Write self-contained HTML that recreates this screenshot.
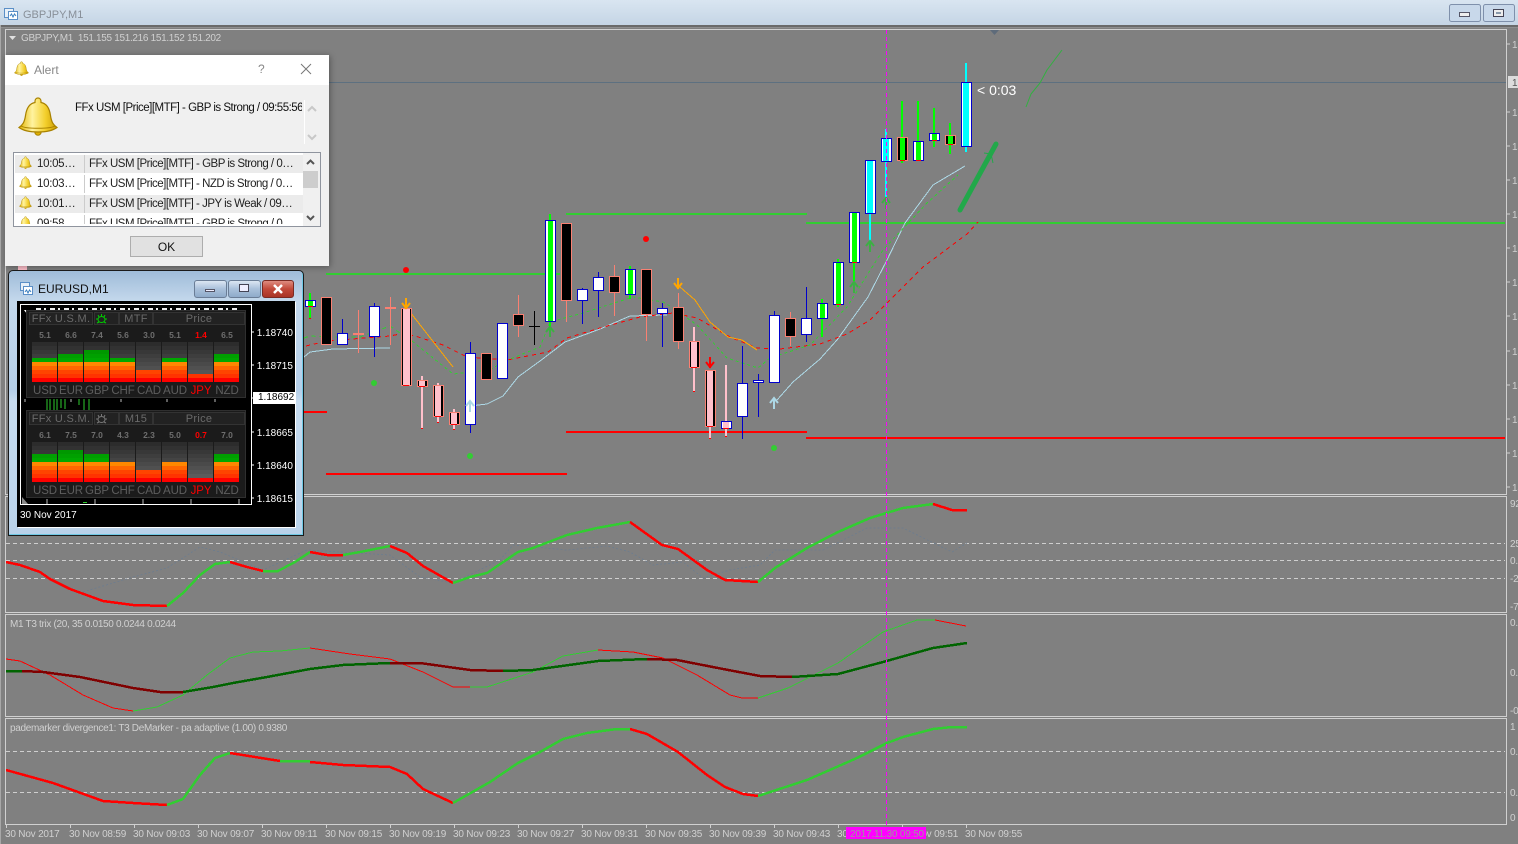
<!DOCTYPE html>
<html><head><meta charset="utf-8"><title>GBPJPY,M1</title>
<style>
html,body{margin:0;padding:0;width:1518px;height:844px;overflow:hidden;background:#808080;font-family:"Liberation Sans",sans-serif}
svg{display:block}
#m{position:absolute;left:0;top:0}
.a{font:10px "Liberation Sans",sans-serif;fill:#d0d0d0;letter-spacing:-.2px}
.a2{letter-spacing:-.32px}
.abs{position:absolute;white-space:nowrap}
#alert{position:absolute;left:5px;top:55px;width:324px;height:211px;background:#f0f0f0;box-shadow:1px 1px 6px rgba(0,0,0,.35)}
#alert .t{position:absolute;left:0;top:0;width:324px;height:30px;background:#fff}
.row{position:absolute;left:1px;width:289px;height:18px;font-size:11.5px;line-height:18px;color:#222;white-space:nowrap;overflow:hidden}
.row.g{background:#ebebeb}
.row span{position:absolute;top:0}
.row i{position:absolute;left:69px;top:0;width:1px;height:20px;background:#ccc}
#eur{position:absolute;left:8px;top:270px;width:294px;height:264px;border:1px solid #1a1a1a;border-top-left-radius:5px;border-top-right-radius:5px;background:linear-gradient(#9fbcd9,#c4d8ec 30px,#b5cfe9 120px,#c6dbef 130px,#b9d2ea);box-shadow:inset -1px -1px 0 #6fc8e4}
.wb{position:absolute;top:9px;height:16px;width:31px;border:1px solid #6a7d96;border-radius:3px;background:linear-gradient(#dbe6f2,#a9c0da 50%,#8fabca)}
#client{position:absolute;left:8px;top:30px;width:278px;height:226px;background:#000;box-shadow:1px 1px 0 #fff}
.p{position:absolute;left:5px;width:220px;height:88px;background:#1b1b1b;border:1px solid #2f2f2f;box-sizing:border-box}
.h{position:absolute;top:1px;height:13px;background:#222;border:1px solid #333;box-sizing:border-box;color:#6a6a6a;font:11px/12px "Liberation Sans",sans-serif;text-align:center;letter-spacing:.3px}
.v,.c{position:absolute;width:26px;text-align:center;color:#6e6e6e;white-space:nowrap}
.v{top:19px;font:bold 8.5px/10px "Liberation Sans",sans-serif}
.c{top:73px;font:11.5px/14px "Liberation Sans",sans-serif;letter-spacing:-.1px;color:#5e5e5e}
.b{position:absolute;top:31px;width:25px;height:40px;background:linear-gradient(#2c2c2c 0 4px,#323232 4px 8px,#383838 8px 12px,#3e3e3e 12px 16px,#444 16px 20px,#4a4a4a 20px 24px,#505050 24px 28px,#565656 28px 32px,#5c5c5c 32px 36px,#626262 36px 40px)}
.b b{position:absolute;left:0;right:0;bottom:0;display:block;background:linear-gradient(to top,#f00 0 4px,#f30 4px 8px,#f40 8px 12px,#f60 12px 16px,#f80 16px 20px,#00a800 20px 24px,#00a000 24px 28px,#009800 28px 40px);background-size:100% 40px;background-position:bottom}
.red{color:#f00!important}
.ax{position:absolute;left:237px;color:#fff;font:10px/12px "Liberation Sans",sans-serif}
</style></head><body>

<svg id="m" width="1518" height="844" viewBox="0 0 1518 844">
<defs>
<linearGradient id="tb" x1="0" y1="0" x2="0" y2="1"><stop offset="0" stop-color="#d9e5f1"/><stop offset="1" stop-color="#c5d5e5"/></linearGradient>
<linearGradient id="bell" x1="0" y1="0" x2="1" y2="0"><stop offset="0" stop-color="#e3b400"/><stop offset=".35" stop-color="#fff3a0"/><stop offset=".7" stop-color="#f3cf2c"/><stop offset="1" stop-color="#c99a00"/></linearGradient>
<symbol id="bl" viewBox="0 0 40 40"><circle cx="20" cy="36" r="3.2" fill="#e0b000" stroke="#a98200"/><path d="M20 2a3 3 0 0 1 3 3v1.500c6 1 8.500 6 9.500 13s3 9.500 6.500 12c-4 3-11 4.500-19 4.500S5 34.500 1 31.500c3.500-2.500 5.500-5 6.500-12S11 7.500 17 6.500V5a3 3 0 0 1 3-3z" fill="url(#bell)" stroke="#a98200" stroke-width="1.200"/><path d="M3 30c5 3 29 3 34 0" fill="none" stroke="#a98200"/></symbol>
</defs>
<rect width="1518" height="844" fill="#808080"/>
<rect width="1518" height="25" fill="url(#tb)"/>
<rect y="25" width="1518" height="2" fill="#6a6a6a"/>
<rect y="27" width="1518" height="1" fill="#8e8e8e"/>
<rect y="25" width="1" height="819" fill="#a8a8a8"/>

<!-- title icon -->
<g fill="none" stroke="#5b8fc7" shape-rendering="crispEdges"><rect x="4.500" y="8.500" width="9" height="9" fill="#e8f0f8"/><rect x="8.500" y="11.500" width="9" height="8" fill="#fff"/></g>
<path d="M10 16l1.500-2 1.500 3 1.500-3 1.500 2" fill="none" stroke="#3b7fc0"/>
<text x="23" y="18" font-size="11" fill="#888f98" font-family="Liberation Sans">GBPJPY,M1</text>
<!-- window buttons -->
<g fill="#c8d8ea" stroke="#7f90ab"><rect x="1449.500" y="4.500" width="31" height="17" rx="2"/><rect x="1483.500" y="4.500" width="31" height="17" rx="2"/></g>
<rect x="1459.500" y="12.500" width="10" height="4" fill="#eee" stroke="#556"/>
<rect x="1493.500" y="9.500" width="10" height="7" fill="#eee" stroke="#445"/><rect x="1496" y="12" width="5" height="2" fill="#8899aa"/>

<!-- pane frames -->
<g fill="none" stroke="#d0d0d0" shape-rendering="crispEdges">
<rect x="5.500" y="29.500" width="1501" height="465"/>
<rect x="5.500" y="496.500" width="1501" height="116"/>
<rect x="5.500" y="614.500" width="1501" height="102"/>
<rect x="5.500" y="718.500" width="1501" height="106"/>
<path d="M1507 44h3M1507 112h3M1507 146h3M1507 180h3M1507 214h3M1507 248h3M1507 282h3M1507 316h3M1507 351h3M1507 385h3M1507 419h3M1507 453h3M1507 487h3"/>
<path d="M6.500 825v3M70.500 825v3M134.500 825v3M198.500 825v3M262.500 825v3M326.500 825v3M390.500 825v3M454.500 825v3M518.500 825v3M582.500 825v3M646.500 825v3M710.500 825v3M774.500 825v3M838.500 825v3M902.500 825v3M966.500 825v3"/>
</g>

<!-- header text -->
<path d="M9 36h7l-3.500 4z" fill="#e0e0e0"/>
<text x="21" y="41" class="a a2">GBPJPY,M1&#160; 151.155 151.216 151.152 151.202</text>
<path d="M990 30h9l-4.500 5z" fill="#5e6b7a"/>

<!-- right axis labels -->
<g class="a">
<text class="a" x="1512" y="48">151.3</text><text class="a" x="1512" y="116">151.2</text><text class="a" x="1512" y="150">151.2</text><text class="a" x="1512" y="184">151.2</text><text class="a" x="1512" y="218">151.2</text><text class="a" x="1512" y="252">151.1</text><text class="a" x="1512" y="286">151.1</text><text class="a" x="1512" y="320">151.1</text><text class="a" x="1512" y="355">151.1</text><text class="a" x="1512" y="389">151.1</text><text class="a" x="1512" y="423">151.1</text><text class="a" x="1512" y="457">151.1</text><text class="a" x="1512" y="491">151.1</text>
<text class="a" x="1510" y="507">92</text><text class="a" x="1510" y="547">25</text><text class="a" x="1510" y="564">0.</text><text class="a" x="1510" y="582">-2</text><text class="a" x="1510" y="610">-7</text>
<text class="a" x="1510" y="626">0.</text><text class="a" x="1510" y="676">0.</text><text class="a" x="1510" y="714">-0</text>
<text class="a" x="1510" y="730">1</text><text class="a" x="1510" y="755">0.</text><text class="a" x="1510" y="796">0.</text><text class="a" x="1510" y="821">0</text>
</g>
<rect x="1508" y="76" width="10" height="12" fill="#dcdcdc"/>
<text x="1512" y="86" font-size="10" fill="#555" font-family="Liberation Sans">151</text>

<!-- price line -->
<path d="M6 82.500H1506" stroke="#5d7080" shape-rendering="crispEdges"/>

<!-- horizontal levels -->
<g fill="none" stroke-width="2" shape-rendering="crispEdges">
<path stroke="#32cd32" d="M326 274H560M566 214H807M806 223H1505"/>
<path stroke="#f00" d="M304 412H327M326 474H567M566 432H807M806 438H1505"/>
</g>

<!-- MAs -->
<g fill="none" shape-rendering="crispEdges">
<polyline stroke="#add8e6" points="304,357 310,352 333,349 390,348"/>
<polyline stroke="#add8e6" points="470,406 487,404 503,396 518,377 540,361 565,342 600,329 630,316 667,315"/>
<polyline stroke="#add8e6" points="777,400 793,382 820,359 837,340 868,297 887,260 905,223 933,185 965,166"/>
<polyline stroke="#f00" stroke-dasharray="4 4" points="306,346 327,341 390,336 400,334 415,336 443,345 467,357 507,360 548,352 567,338 600,328 640,317 673,313 697,318 730,337 757,348 780,349 820,344 847,334 870,320 897,293 923,267 967,234 978,222"/>
<polyline stroke="#32cd32" stroke-dasharray="4 4" points="304,338 310,336 327,337 360,337 390,326 400,333"/>
<polyline stroke="#32cd32" stroke-dasharray="3 3" points="412,341 453,374 490,370 503,362 540,347 550,322 583,313 633,297 663,302 673,308 697,325 727,358 758,368 770,358 810,345 847,307 883,250 927,203 958,175"/>
<polyline stroke="#ffa500" points="410,312 453,367"/>
<polyline stroke="#ffa500" points="680,287 695,300 710,322 728,337 742,340 757,350"/>
</g>

<!-- wicks -->
<g shape-rendering="crispEdges">
<g fill="#fa8072">
<rect x="358" y="310" width="1" height="43"/><rect x="390" y="297" width="1" height="48"/><rect x="518" y="295" width="1" height="42"/><rect x="566" y="301" width="1" height="21"/><rect x="614" y="265" width="1" height="51"/><rect x="646" y="315" width="1" height="26"/><rect x="678" y="293" width="1" height="56"/><rect x="790" y="312" width="1" height="34"/>
</g>
<g fill="#0000cd">
<rect x="342" y="319" width="1" height="14"/><rect x="374" y="303" width="1" height="54"/><rect x="470" y="342" width="1" height="91"/><rect x="582" y="288" width="1" height="36"/><rect x="598" y="272" width="1" height="45"/><rect x="662" y="303" width="1" height="44"/><rect x="742" y="346" width="1" height="93"/><rect x="758" y="374" width="1" height="43"/><rect x="774" y="311" width="1" height="5"/><rect x="806" y="287" width="1" height="55"/>
</g>
<rect x="534" y="311" width="1" height="34" fill="#000"/><rect x="529" y="326" width="11" height="1" fill="#000"/>
<rect x="353" y="333" width="11" height="2" fill="#fa8072"/><rect x="385" y="307" width="11" height="2" fill="#fa8072"/>
<g fill="#ffc0cb">
<rect x="421" y="376" width="2" height="53"/><rect x="437" y="383" width="2" height="40"/><rect x="453" y="409" width="2" height="21"/><rect x="693" y="327" width="2" height="65"/><rect x="709" y="370" width="2" height="69"/><rect x="725" y="365" width="2" height="72"/>
</g>
<g fill="#0f0">
<rect x="309" y="293" width="2" height="26"/><rect x="549" y="214" width="2" height="119"/><rect x="629" y="266" width="2" height="33"/><rect x="821" y="299" width="2" height="38"/><rect x="837" y="259" width="2" height="48"/><rect x="853" y="212" width="2" height="69"/><rect x="901" y="101" width="2" height="62"/><rect x="917" y="101" width="2" height="60"/><rect x="933" y="108" width="2" height="39"/><rect x="949" y="123" width="2" height="31"/>
</g>
<g fill="#0ff">
<rect x="869" y="160" width="2" height="81"/><rect x="885" y="129" width="2" height="68"/><rect x="965" y="63" width="2" height="89"/>
</g>

<!-- black bodies -->
<g fill="#000" stroke="#fa8072">
<rect x="321.500" y="297.500" width="10" height="47"/><rect x="513.500" y="314.500" width="10" height="11"/><rect x="481.500" y="353.500" width="10" height="26"/><rect x="561.500" y="223.500" width="10" height="77"/><rect x="609.500" y="276.500" width="10" height="16"/><rect x="641.500" y="269.500" width="10" height="45"/><rect x="673.500" y="307.500" width="10" height="34"/><rect x="785.500" y="318.500" width="10" height="18"/>
<rect x="401.500" y="308.500" width="10" height="77"/><rect x="417.500" y="380.500" width="10" height="6"/><rect x="433.500" y="385.500" width="10" height="31"/><rect x="449.500" y="412.500" width="10" height="12"/><rect x="689.500" y="341.500" width="10" height="26"/><rect x="705.500" y="370.500" width="10" height="56"/>
<rect x="897.500" y="137.500" width="10" height="23"/><rect x="945.500" y="135.500" width="10" height="9"/>
</g>
<!-- white bodies -->
<g fill="#fff" stroke="#0000cd">
<rect x="305.500" y="300.500" width="10" height="6"/><rect x="337.500" y="333.500" width="10" height="11"/><rect x="369.500" y="306.500" width="10" height="30"/><rect x="465.500" y="353.500" width="10" height="71"/><rect x="497.500" y="323.500" width="10" height="55"/><rect x="545.500" y="220.500" width="10" height="101"/><rect x="577.500" y="289.500" width="10" height="11"/><rect x="593.500" y="277.500" width="10" height="13"/><rect x="625.500" y="269.500" width="10" height="25"/><rect x="657.500" y="308.500" width="10" height="5"/><rect x="721.500" y="421.500" width="10" height="7"/><rect x="737.500" y="383.500" width="10" height="33"/><rect x="753.500" y="380.500" width="10" height="2"/><rect x="769.500" y="315.500" width="10" height="67"/><rect x="801.500" y="318.500" width="10" height="16"/><rect x="817.500" y="303.500" width="10" height="15"/><rect x="833.500" y="262.500" width="10" height="42"/><rect x="849.500" y="212.500" width="10" height="50"/><rect x="865.500" y="160.500" width="10" height="53"/><rect x="881.500" y="138.500" width="10" height="23"/><rect x="913.500" y="141.500" width="10" height="19"/><rect x="929.500" y="133.500" width="10" height="7"/><rect x="961.500" y="82.500" width="10" height="64"/>
</g>
<!-- centre bars -->
<g fill="#ffc0cb">
<rect x="403" y="309" width="7" height="76"/><rect x="419" y="381" width="6" height="5"/><rect x="435" y="386" width="6" height="30"/><rect x="451" y="413" width="6" height="11"/><rect x="691" y="342" width="6" height="25"/><rect x="707" y="371" width="6" height="55"/><rect x="723" y="422" width="6" height="6"/>
</g>
<g fill="#0f0">
<rect x="308" y="301" width="5" height="5"/><rect x="548" y="221" width="5" height="100"/><rect x="628" y="270" width="5" height="24"/><rect x="820" y="304" width="5" height="14"/><rect x="836" y="263" width="5" height="41"/><rect x="852" y="213" width="5" height="49"/><rect x="900" y="138" width="5" height="22"/><rect x="916" y="142" width="5" height="18"/><rect x="932" y="134" width="5" height="6"/><rect x="948" y="136" width="5" height="8"/>
</g>
<g fill="#0ff">
<rect x="867" y="161" width="6" height="52"/><rect x="883" y="139" width="6" height="22"/><rect x="963" y="83" width="6" height="63"/>
</g>
<g fill="#f00">
<rect x="308" y="306" width="5" height="1"/><rect x="309" y="318" width="2" height="1"/><rect x="403" y="385" width="6" height="1"/><rect x="419" y="386" width="6" height="1"/><rect x="421" y="428" width="2" height="1"/><rect x="435" y="416" width="6" height="1"/><rect x="437" y="422" width="2" height="1"/><rect x="451" y="424" width="6" height="1"/><rect x="453" y="429" width="2" height="1"/><rect x="691" y="367" width="6" height="1"/><rect x="693" y="391" width="2" height="1"/><rect x="707" y="426" width="6" height="1"/><rect x="709" y="438" width="2" height="1"/><rect x="723" y="428" width="6" height="1"/><rect x="725" y="436" width="2" height="1"/><rect x="836" y="304" width="5" height="1"/><rect x="852" y="262" width="5" height="1"/><rect x="900" y="160" width="5" height="1"/><rect x="916" y="160" width="5" height="1"/><rect x="932" y="140" width="5" height="1"/><rect x="948" y="144" width="5" height="1"/>
</g>
</g>

<!-- dots -->
<circle cx="406" cy="270" r="3" fill="#f00"/><circle cx="646" cy="239" r="3" fill="#f00"/>
<circle cx="374" cy="383" r="3" fill="#32cd32"/><circle cx="470" cy="456" r="3" fill="#32cd32"/><circle cx="774" cy="448" r="3" fill="#32cd32"/>

<!-- arrows -->
<g fill="none" stroke-width="2">
<path stroke="#ffa500" d="M406 298v11M402 303l4 5 4-5"/>
<path stroke="#ffa500" d="M678 278v11M674 283l4 5 4-5"/>
<path stroke="#f00" d="M710 357v11M706 362l4 5 4-5"/>
<path stroke="#add8e6" d="M470 412v-11M466 406l4-5 4 5"/>
<path stroke="#add8e6" d="M774 409v-11M770 403l4-5 4 5"/>
<path stroke="#3cb043" d="M550 337v-11M546 332l4-5 4 5"/>
<path stroke="#3cb043" d="M854 293v-11M850 287l4-5 4 5"/>
<path stroke="#3cb043" d="M870 252v-11M866 246l4-5 4 5"/>
<path stroke="#3cb043" d="M886 209v-11M882 203l4-5 4 5"/>
</g>

<!-- trend arrow -->
<path d="M960 210L996 144" stroke="#22a84a" stroke-width="5" stroke-linecap="round" fill="none"/>
<path d="M984 153l7 1 2 9" stroke="#22a84a" fill="none"/>
<polyline points="1026,107 1031,94 1040,83 1047,70 1062,50" fill="none" stroke="#32b040"/>
<text x="977" y="95" font-size="14" fill="#fff" font-family="Liberation Sans">&lt; 0:03</text>

<!-- indicator dashes -->
<g stroke="#cfcfcf" stroke-dasharray="4 3" shape-rendering="crispEdges">
<path d="M6 543.500H1505M6 560.500H1505M6 578.500H1505M6 751.500H1505M6 792.500H1505"/>
</g>

<!-- pane 2 -->
<g fill="none" shape-rendering="crispEdges">
<polyline stroke="#6f7d8c" stroke-dasharray="2 2" points="83,592 133,577 167,568 200,547 220,552 263,570 307,550 390,555 420,577 453,583 500,560 513,545 567,550 607,546 630,552 653,565 683,562 703,578 730,570 760,565 775,550 823,550 867,528 903,528 952,552 967,543"/>
<g stroke-width="2.500">
<polyline stroke="#f00" points="6,562 20,565 40,572 50,579 70,589 103,601 133,605 167,606"/>
<polyline stroke="#32cd32" points="167,606 183,593 200,575 215,564 230,562"/>
<polyline stroke="#f00" points="230,562 247,567 263,571"/>
<polyline stroke="#32cd32" points="263,571 278,571 295,562 310,552"/>
<polyline stroke="#f00" points="310,552 327,555 343,555"/>
<polyline stroke="#32cd32" points="343,555 360,552 390,546"/>
<polyline stroke="#f00" points="390,546 407,553 423,566 453,583"/>
<polyline stroke="#32cd32" points="453,583 470,577 487,573 518,552 533,548 567,535 597,528 630,522"/>
<polyline stroke="#f00" points="630,522 662,545 678,549 707,570 725,580 758,582"/>
<polyline stroke="#32cd32" points="758,582 775,568 807,548 838,532 870,518 903,508 933,504"/>
<polyline stroke="#f00" points="933,504 952,510 967,510"/>
</g>
<!-- pane 3 thin -->
<polyline stroke="#f00" points="6,659 20,661 50,675 83,695 113,708 133,711"/>
<polyline stroke="#32cd32" points="133,711 157,707 183,695 207,675 230,658 253,652 280,651 310,648"/>
<polyline stroke="#f00" points="310,648 350,654 390,659 423,672 453,687 470,687"/>
<polyline stroke="#32cd32" points="470,687 487,687 533,672 563,656 598,650"/>
<polyline stroke="#f00" points="598,650 633,652 663,658 697,675 730,695 742,698 758,698"/>
<polyline stroke="#32cd32" points="758,698 788,688 838,663 883,632 917,620 935,620"/>
<polyline stroke="#f00" points="935,620 966,626"/>
<!-- pane 3 thick -->
<g stroke-width="2.500">
<polyline stroke="#006400" points="6,671 22,671"/>
<polyline stroke="#800000" points="22,671 43,672 80,677 133,688 160,692 183,692"/>
<polyline stroke="#006400" points="183,692 213,687 233,683 267,677 310,669 343,665 390,663"/>
<polyline stroke="#800000" points="390,663 420,663 470,670 503,671"/>
<polyline stroke="#006400" points="503,671 533,670 598,661 647,659"/>
<polyline stroke="#800000" points="647,659 677,660 723,669 760,676 792,677"/>
<polyline stroke="#006400" points="792,677 838,674 883,662 933,648 967,643"/>
</g>
<!-- pane 4 -->
<g stroke-width="2.500">
<polyline stroke="#f00" points="6,770 53,783 103,801 133,803 167,805"/>
<polyline stroke="#32cd32" points="167,805 183,799 200,775 215,758 230,753"/>
<polyline stroke="#f00" points="230,753 280,761"/>
<polyline stroke="#32cd32" points="280,761 310,761"/>
<polyline stroke="#f00" points="310,762 343,765 390,767 407,774 423,789 453,803"/>
<polyline stroke="#32cd32" points="453,803 490,782 518,763 540,752 563,739 587,733 617,729 630,729"/>
<polyline stroke="#f00" points="630,729 647,734 678,752 707,775 725,787 743,794 758,796"/>
<polyline stroke="#32cd32" points="758,796 807,780 857,758 887,743 903,737 933,729 952,727 967,727"/>
</g>
</g>

<text x="10" y="627" class="a a2">M1 T3 trix (20, 35 0.0150 0.0244 0.0244</text>
<text x="10" y="731" class="a a2">pademarker divergence1: T3 DeMarker - pa adaptive (1.00) 0.9380</text>

<!-- time axis -->
<text class="a" x="5" y="837">30 Nov 2017</text><text class="a" x="69" y="837">30 Nov 08:59</text><text class="a" x="133" y="837">30 Nov 09:03</text><text class="a" x="197" y="837">30 Nov 09:07</text><text class="a" x="261" y="837">30 Nov 09:11</text><text class="a" x="325" y="837">30 Nov 09:15</text><text class="a" x="389" y="837">30 Nov 09:19</text><text class="a" x="453" y="837">30 Nov 09:23</text><text class="a" x="517" y="837">30 Nov 09:27</text><text class="a" x="581" y="837">30 Nov 09:31</text><text class="a" x="645" y="837">30 Nov 09:35</text><text class="a" x="709" y="837">30 Nov 09:39</text><text class="a" x="773" y="837">30 Nov 09:43</text><text class="a" x="837" y="837">30 Nov 09:47</text><text class="a" x="901" y="837">30 Nov 09:51</text><text class="a" x="965" y="837">30 Nov 09:55</text>
<rect x="846" y="827" width="80" height="12" fill="#f0f"/>
<text x="850" y="837" font-size="10" fill="#9a9a9a" font-family="Liberation Sans" letter-spacing="-.2">2017.11.30 09:50</text>
<path d="M886.500 30V825" stroke="#f0f" stroke-dasharray="4 3" shape-rendering="crispEdges"/>

<rect x="18" y="265" width="9" height="5" fill="#ffc0cb"/>
</svg>

<!-- Alert dialog -->
<div id="alert">
 <div class="t"></div>
 <svg class="abs" style="left:9px;top:6px" width="15" height="15"><use href="#bl" width="15" height="15"/></svg>
 <div class="abs" style="left:29px;top:8px;font-size:12px;color:#888">Alert</div>
 <div class="abs" style="left:253px;top:7px;font-size:12px;color:#888">?</div>
 <svg class="abs" style="left:295px;top:8px" width="12" height="12"><path d="M1 1l10 10M11 1L1 11" stroke="#777" fill="none"/></svg>
 <svg class="abs" style="left:13px;top:41px" width="40" height="40"><use href="#bl" width="40" height="40"/></svg>
 <div class="abs" style="left:70px;top:46px;width:227px;overflow:hidden;font-size:11.5px;line-height:14px;color:#111;letter-spacing:-.5px">FFx USM [Price][MTF] - GBP is Strong / 09:55:56</div>
 <div class="abs" style="left:299px;top:45px;width:1px;height:44px;background:#fff"></div>
 <svg class="abs" style="left:302px;top:49px" width="10" height="40"><path d="M1 7l4-4 4 4M1 31l4 4 4-4" fill="none" stroke="#c8c8c8" stroke-width="2"/></svg>
 <div class="abs" style="left:8px;top:97px;width:306px;height:73px;background:#fff;border:1px solid #8f949e;overflow:hidden">
  <div class="row g" style="top:2px"><svg class="abs" style="left:4px;top:1px" width="13" height="13"><use href="#bl" width="13" height="13"/></svg><span style="left:22px;letter-spacing:-.3px">10:05…</span><i></i><span style="left:74px;letter-spacing:-.5px">FFx USM [Price][MTF] - GBP is Strong / 0…</span></div>
  <div class="row" style="top:22px"><svg class="abs" style="left:4px;top:1px" width="13" height="13"><use href="#bl" width="13" height="13"/></svg><span style="left:22px;letter-spacing:-.3px">10:03…</span><i></i><span style="left:74px;letter-spacing:-.5px">FFx USM [Price][MTF] - NZD is Strong / 0…</span></div>
  <div class="row g" style="top:42px"><svg class="abs" style="left:4px;top:1px" width="13" height="13"><use href="#bl" width="13" height="13"/></svg><span style="left:22px;letter-spacing:-.3px">10:01…</span><i></i><span style="left:74px;letter-spacing:-.5px">FFx USM [Price][MTF] - JPY is Weak / 09…</span></div>
  <div class="row" style="top:62px"><svg class="abs" style="left:4px;top:1px" width="13" height="13"><use href="#bl" width="13" height="13"/></svg><span style="left:22px;letter-spacing:-.3px">09:58…</span><i></i><span style="left:74px;letter-spacing:-.5px">FFx USM [Price][MTF] - GBP is Strong / 0…</span></div>
  <div class="abs" style="left:0;top:71px;width:290px;height:2px;background:#fff"></div>
  <div class="abs" style="left:289px;top:0;width:17px;height:73px;background:#f0f0f0"></div>
  <div class="abs" style="left:289px;top:18px;width:15px;height:17px;background:#cdcdcd"></div>
  <svg class="abs" style="left:291px;top:4px" width="11" height="66"><path d="M2 7l3.500-3.500L9 7M2 59l3.500 3.500L9 59" fill="none" stroke="#555" stroke-width="2"/></svg>
 </div>
 <div class="abs" style="left:125px;top:181px;width:71px;height:19px;background:#e1e1e1;border:1px solid #adadad;text-align:center;font-size:12px;line-height:20px;color:#111">OK</div>
</div>

<!-- EURUSD window -->
<div id="eur">
 <svg class="abs" style="left:10px;top:10px" width="15" height="15"><rect x="1.500" y="1.500" width="9" height="8" fill="#e8f0f8" stroke="#5b8fc7"/><rect x="4.500" y="5.500" width="9" height="8" fill="#fff" stroke="#5b8fc7"/><path d="M6 11l1.500-2 1.500 3 1.500-3 1.500 2" fill="none" stroke="#3b7fc0"/></svg>
 <div class="abs" style="left:29px;top:11px;font-size:12px;line-height:15px;color:#111">EURUSD,M1</div>
 <div class="wb" style="left:185px"><div style="position:absolute;left:10px;top:8px;width:10px;height:3px;background:#eef;border:1px solid #556;box-sizing:border-box"></div></div>
 <div class="wb" style="left:219px"><div style="position:absolute;left:10px;top:3px;width:10px;height:8px;background:#eef;border:1px solid #445;box-sizing:border-box"></div></div>
 <div class="wb" style="left:253px;width:30px;background:linear-gradient(#de8c80,#c2493a 50%,#a83426);border-color:#7a2a22"><svg style="position:absolute;left:9px;top:3px" width="12" height="10"><path d="M2 1l8 8M10 1L2 9" stroke="#fff" stroke-width="2.500"/></svg></div>
 <div id="client">
  <svg class="abs" style="left:0;top:0" width="278" height="226">
   <rect x="3.500" y="3.500" width="231" height="200" fill="none" stroke="#fff" shape-rendering="crispEdges"/>
   <path d="M234 31h3M234 64h3M234 97h3M234 131h3M234 164h3M234 197h3" stroke="#fff" shape-rendering="crispEdges"/>
   <path d="M19 8H220" stroke="#eee" stroke-width="2" stroke-dasharray="5 3 2 4" shape-rendering="crispEdges"/>
   <path d="M7 9h6l-3 4z" fill="#fff"/><path d="M5 203v-7l6 7z" fill="#888"/>
   <path d="M30 98v11M33 98v11M37 98v11M40 98v11M44 98v9M48 98v10M62 98v6M67 98v11M72 98v11" stroke="#2ecc2e" shape-rendering="crispEdges"/>
   <path d="M30 198v5M78 198v5M126 198v5M174 198v5M222 198v5" stroke="#bbb" shape-rendering="crispEdges"/>
   <path d="M8 98v3M54 98v3M104 98v3M150 98v3M198 98v3" stroke="#bbb" shape-rendering="crispEdges"/>
   <rect x="66" y="201" width="4" height="1" fill="#2ecc2e"/>
  </svg>
  <!-- panel 1 -->
  <div class="p" style="top:9px;left:9px">
   <div class="h" style="left:2px;width:64px">FFx U.S.M.</div><div class="h" style="left:67px;width:25px;color:#0c0;font-size:9px"><svg width="13" height="10" style="margin-top:1px"><ellipse cx="6.500" cy="5.500" rx="3.500" ry="3" fill="none" stroke="#0c0"/><path d="M1 5h2M10 5h2M3 1l1 2M10 1L9 3M6.500 0v2M2 9l2-1M11 9L9 8" stroke="#0c0"/></svg></div><div class="h" style="left:92px;width:34px">MTF</div><div class="h" style="left:126px;width:92px">Price</div>
   <div class="v" style="left:5px">5.1</div><div class="v" style="left:31px">6.6</div><div class="v" style="left:57px">7.4</div><div class="v" style="left:83px">5.6</div><div class="v" style="left:109px">3.0</div><div class="v" style="left:135px">5.1</div><div class="v red" style="left:161px">1.4</div><div class="v" style="left:187px">6.5</div>
   <div class="b" style="left:5px"><b style="height:24px"></b></div><div class="b" style="left:31px"><b style="height:28px"></b></div><div class="b" style="left:57px"><b style="height:32px"></b></div><div class="b" style="left:83px"><b style="height:24px"></b></div><div class="b" style="left:109px"><b style="height:12px"></b></div><div class="b" style="left:135px"><b style="height:24px"></b></div><div class="b" style="left:161px"><b style="height:8px"></b></div><div class="b" style="left:187px"><b style="height:28px"></b></div>
   <div class="c" style="left:5px">USD</div><div class="c" style="left:31px">EUR</div><div class="c" style="left:57px">GBP</div><div class="c" style="left:83px">CHF</div><div class="c" style="left:109px">CAD</div><div class="c" style="left:135px">AUD</div><div class="c red" style="left:161px">JPY</div><div class="c" style="left:187px">NZD</div>
  </div>
  <!-- panel 2 -->
  <div class="p" style="top:109px;left:9px">
   <div class="h" style="left:2px;width:64px">FFx U.S.M.</div><div class="h" style="left:67px;width:25px"><svg width="13" height="10" style="margin-top:1px"><ellipse cx="6.500" cy="5.500" rx="3.500" ry="3" fill="none" stroke="#777"/><path d="M1 5h2M10 5h2M3 1l1 2M10 1L9 3M6.500 0v2M2 9l2-1M11 9L9 8" stroke="#777"/></svg></div><div class="h" style="left:92px;width:34px">M15</div><div class="h" style="left:126px;width:92px">Price</div>
   <div class="v" style="left:5px">6.1</div><div class="v" style="left:31px">7.5</div><div class="v" style="left:57px">7.0</div><div class="v" style="left:83px">4.3</div><div class="v" style="left:109px">2.3</div><div class="v" style="left:135px">5.0</div><div class="v red" style="left:161px">0.7</div><div class="v" style="left:187px">7.0</div>
   <div class="b" style="left:5px"><b style="height:28px"></b></div><div class="b" style="left:31px"><b style="height:32px"></b></div><div class="b" style="left:57px"><b style="height:28px"></b></div><div class="b" style="left:83px"><b style="height:20px"></b></div><div class="b" style="left:109px"><b style="height:12px"></b></div><div class="b" style="left:135px"><b style="height:20px"></b></div><div class="b" style="left:161px"><b style="height:4px"></b></div><div class="b" style="left:187px"><b style="height:28px"></b></div>
   <div class="c" style="left:5px">USD</div><div class="c" style="left:31px">EUR</div><div class="c" style="left:57px">GBP</div><div class="c" style="left:83px">CHF</div><div class="c" style="left:109px">CAD</div><div class="c" style="left:135px">AUD</div><div class="c red" style="left:161px">JPY</div><div class="c" style="left:187px">NZD</div>
  </div>
  <div class="ax" style="top:27px">&#160;1.18740</div>
  <div class="ax" style="top:60px">&#160;1.18715</div>
  <div class="abs" style="left:236px;top:91px;width:42px;height:12px;background:#fff;color:#000;font:10px/12px 'Liberation Sans',sans-serif;text-indent:5px">1.18692</div>
  <div class="ax" style="top:127px">&#160;1.18665</div>
  <div class="ax" style="top:160px">&#160;1.18640</div>
  <div class="ax" style="top:193px">&#160;1.18615</div>
  <div class="abs" style="left:3px;top:209px;color:#fff;font:10px/12px 'Liberation Sans',sans-serif">30 Nov 2017</div>
 </div>
</div>
</body></html>
